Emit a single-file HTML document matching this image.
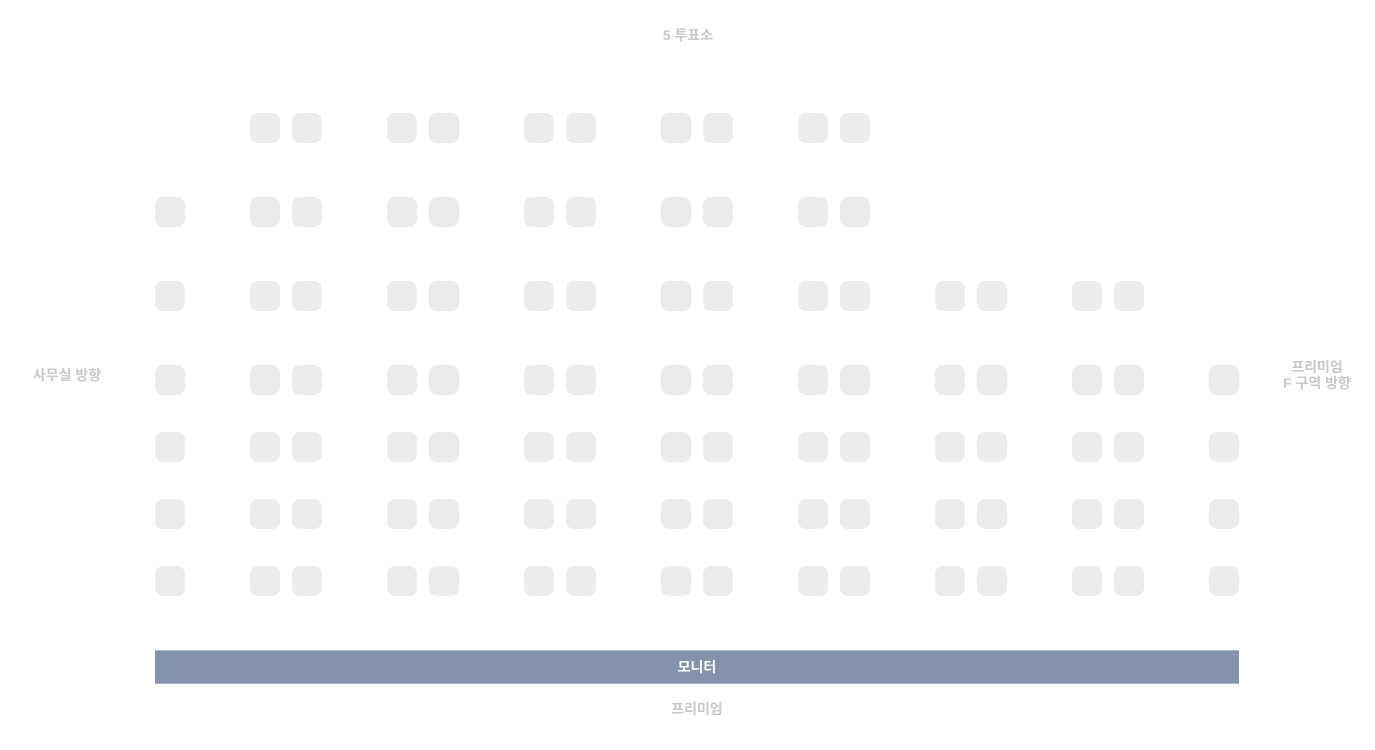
<!DOCTYPE html>
<html><head><meta charset="utf-8"><style>
body{margin:0;width:1375px;height:750px;background:#fff;position:relative;overflow:hidden;font-family:"Liberation Sans","Noto Sans CJK KR",sans-serif}
.s{position:absolute;width:30px;height:30px;border-radius:8px;background:#ececec}
.t{position:absolute;color:#c8c8c8;font-size:14px;font-weight:bold;text-align:center;line-height:16px}
.r{position:absolute;left:0;width:1375px;height:30px}
</style></head><body>
<div class="t" style="left:588px;top:27px;width:200px">5 투표소</div>
<div class="t" style="left:0;top:367px;width:134px">사무실 방향</div>
<div class="t" style="left:1257px;top:359px;width:120px">프리미엄<br>F 구역 방향</div>

<div class="r" style="top:113px">
<div class="s" style="left:250px"></div><div class="s" style="left:292px"></div><div class="s" style="left:387px"></div><div class="s" style="left:429px"></div><div class="s" style="left:524px"></div><div class="s" style="left:566px"></div><div class="s" style="left:661px"></div><div class="s" style="left:703px"></div><div class="s" style="left:798px"></div><div class="s" style="left:840px"></div>
</div>
<div class="r" style="top:197px">
<div class="s" style="left:155px"></div>
<div class="s" style="left:250px"></div><div class="s" style="left:292px"></div><div class="s" style="left:387px"></div><div class="s" style="left:429px"></div><div class="s" style="left:524px"></div><div class="s" style="left:566px"></div><div class="s" style="left:661px"></div><div class="s" style="left:703px"></div><div class="s" style="left:798px"></div><div class="s" style="left:840px"></div>
</div>
<div class="r" style="top:281px">
<div class="s" style="left:155px"></div>
<div class="s" style="left:250px"></div><div class="s" style="left:292px"></div><div class="s" style="left:387px"></div><div class="s" style="left:429px"></div><div class="s" style="left:524px"></div><div class="s" style="left:566px"></div><div class="s" style="left:661px"></div><div class="s" style="left:703px"></div><div class="s" style="left:798px"></div><div class="s" style="left:840px"></div>
<div class="s" style="left:935px"></div><div class="s" style="left:977px"></div><div class="s" style="left:1072px"></div><div class="s" style="left:1114px"></div>
</div>
<div class="r" style="top:365px">
<div class="s" style="left:155px"></div>
<div class="s" style="left:250px"></div><div class="s" style="left:292px"></div><div class="s" style="left:387px"></div><div class="s" style="left:429px"></div><div class="s" style="left:524px"></div><div class="s" style="left:566px"></div><div class="s" style="left:661px"></div><div class="s" style="left:703px"></div><div class="s" style="left:798px"></div><div class="s" style="left:840px"></div>
<div class="s" style="left:935px"></div><div class="s" style="left:977px"></div><div class="s" style="left:1072px"></div><div class="s" style="left:1114px"></div><div class="s" style="left:1209px"></div>
</div>
<div class="r" style="top:432px">
<div class="s" style="left:155px"></div>
<div class="s" style="left:250px"></div><div class="s" style="left:292px"></div><div class="s" style="left:387px"></div><div class="s" style="left:429px"></div><div class="s" style="left:524px"></div><div class="s" style="left:566px"></div><div class="s" style="left:661px"></div><div class="s" style="left:703px"></div><div class="s" style="left:798px"></div><div class="s" style="left:840px"></div>
<div class="s" style="left:935px"></div><div class="s" style="left:977px"></div><div class="s" style="left:1072px"></div><div class="s" style="left:1114px"></div><div class="s" style="left:1209px"></div>
</div>
<div class="r" style="top:499px">
<div class="s" style="left:155px"></div>
<div class="s" style="left:250px"></div><div class="s" style="left:292px"></div><div class="s" style="left:387px"></div><div class="s" style="left:429px"></div><div class="s" style="left:524px"></div><div class="s" style="left:566px"></div><div class="s" style="left:661px"></div><div class="s" style="left:703px"></div><div class="s" style="left:798px"></div><div class="s" style="left:840px"></div>
<div class="s" style="left:935px"></div><div class="s" style="left:977px"></div><div class="s" style="left:1072px"></div><div class="s" style="left:1114px"></div><div class="s" style="left:1209px"></div>
</div>
<div class="r" style="top:566px">
<div class="s" style="left:155px"></div>
<div class="s" style="left:250px"></div><div class="s" style="left:292px"></div><div class="s" style="left:387px"></div><div class="s" style="left:429px"></div><div class="s" style="left:524px"></div><div class="s" style="left:566px"></div><div class="s" style="left:661px"></div><div class="s" style="left:703px"></div><div class="s" style="left:798px"></div><div class="s" style="left:840px"></div>
<div class="s" style="left:935px"></div><div class="s" style="left:977px"></div><div class="s" style="left:1072px"></div><div class="s" style="left:1114px"></div><div class="s" style="left:1209px"></div>
</div>

<div style="position:absolute;left:155px;top:650px;width:1084px;height:34px;background:#8393ab;border-top:1px solid #aab4c4;border-bottom:1px solid #aab4c4;box-sizing:border-box;color:#fff;font-size:14px;font-weight:bold;text-align:center;line-height:32px">모니터</div>
<div class="t" style="left:597px;top:701px;width:200px">프리미엄</div>
</body></html>
